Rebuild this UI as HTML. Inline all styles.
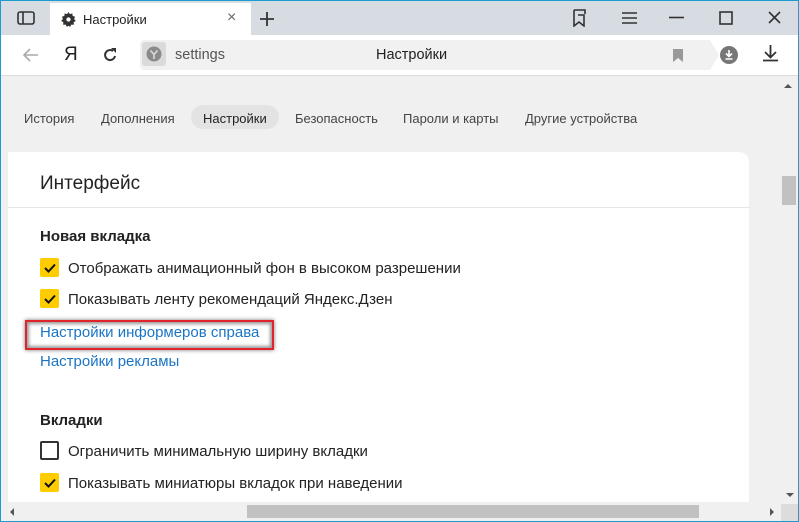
<!DOCTYPE html>
<html><head><meta charset="utf-8"><style>
*{margin:0;padding:0;box-sizing:border-box}
body{width:799px;height:522px;overflow:hidden;font-family:"Liberation Sans","DejaVu Sans",sans-serif;background:#1b9bd0;position:relative}
.win{position:absolute;left:1px;top:1px;width:797px;height:520px;background:#f0f0f0;overflow:hidden}
.title{position:absolute;left:0;top:0;width:797px;height:34px;background:#d7dbe2}
.tab{position:absolute;left:49px;top:2px;width:201px;height:33px;background:#fff}
.tb{position:absolute;left:0;top:34px;width:797px;height:41px;background:#fff;border-bottom:1px solid #dcdcdc}
.addr{position:absolute;left:139px;top:5px;width:570px;height:30px;background:#f1f1f1;border-radius:4px 0 0 4px}
.t{position:absolute;white-space:nowrap}
.nav{font-size:13px;color:#444;top:110px}
.card{position:absolute;left:7px;top:151px;width:741px;height:350px;background:#fff;border-radius:0 10px 0 0;overflow:hidden}
.cb{position:absolute;left:32px;width:19px;height:19px;border-radius:2px;background:#ffcc00}
.cb.e{background:#fff;border:2px solid #333}
.lbl{font-size:15px;color:#222;left:60px}
.lnk{font-size:15px;color:#1a75c7;left:32px}
</style></head><body><div class="win">
<div class="title">
<svg style="position:absolute;left:16px;top:10px" width="18" height="14"><rect x="1" y="1" width="16" height="12" rx="2" fill="none" stroke="#333" stroke-width="1.6"/><line x1="6" y1="1" x2="6" y2="13" stroke="#333" stroke-width="1.6"/></svg>
<div class="tab">
<svg style="position:absolute;left:11px;top:9px" width="15" height="15" viewBox="0 0 16 16"><path d="M8 0l1.5 2.2 2.6-.8.3 2.7 2.6.9-1 2.5 1.8 2-2.3 1.4.2 2.7-2.7-.2-1.3 2.4L8 14.6l-1.7 1.2-1.3-2.4-2.7.2.2-2.7L.2 9.5 2 7.5 1 5l2.6-.9.3-2.7 2.6.8z" fill="#333"/><circle cx="8" cy="8" r="2.3" fill="#fff"/></svg>
<span class="t" style="left:33px;top:9px;font-size:13px;color:#222">Настройки</span>
<span class="t" style="left:177px;top:6px;font-size:16px;color:#666">×</span>
</div>
<svg style="position:absolute;left:258px;top:10px" width="16" height="16"><path d="M8 1v14M1 8h14" stroke="#333" stroke-width="1.8"/></svg>
<svg style="position:absolute;left:572px;top:8px" width="16" height="18"><path d="M1 1h11v4M1 1v16l5-4 5 4V6H5" fill="none" stroke="#333" stroke-width="1.6"/></svg>
<svg style="position:absolute;left:621px;top:11px" width="15" height="12"><path d="M0 1h15M0 6h15M0 11h15" stroke="#333" stroke-width="1.6"/></svg>
<svg style="position:absolute;left:668px;top:15px" width="15" height="3"><path d="M0 1.5h15" stroke="#333" stroke-width="1.6"/></svg>
<svg style="position:absolute;left:718px;top:10px" width="14" height="14"><rect x="1" y="1" width="12" height="12" fill="none" stroke="#333" stroke-width="1.6"/></svg>
<svg style="position:absolute;left:767px;top:10px" width="13" height="13"><path d="M1 1l11 11M12 1L1 12" stroke="#333" stroke-width="1.6"/></svg>
</div>
<div class="tb">
<svg style="position:absolute;left:22px;top:13px" width="16" height="14"><path d="M15 7H2M7 1L1 7l6 6" fill="none" stroke="#aaa" stroke-width="1.6"/></svg>
<span class="t" style="left:63px;top:9px;font-size:19px;color:#222">Я</span>
<svg style="position:absolute;left:102px;top:12px" width="15" height="16"><path d="M12 9a5 5 0 1 1-2-5" fill="none" stroke="#333" stroke-width="2"/><path d="M8 1h5v5z" fill="#333"/></svg>
<div class="addr">
<div style="position:absolute;left:2px;top:2px;width:24px;height:24px;background:#dadada;border-radius:3px"></div>
<svg style="position:absolute;left:6px;top:6px" width="16" height="16"><circle cx="8" cy="8" r="7.5" fill="#8a8a8a"/><path d="M4.5 4.5L8 8.5l3.5-4M8 8.5V13" stroke="#dadada" stroke-width="1.6" fill="none"/></svg>
<span class="t" style="left:35px;top:7px;font-size:14.5px;color:#555">settings</span>
<span class="t" style="left:236px;top:7px;font-size:14.5px;color:#222">Настройки</span>
<svg style="position:absolute;left:533px;top:9px" width="10" height="13"><path d="M0 0h10v13L5 9 0 13z" fill="#999"/></svg>
</div>
<svg style="position:absolute;left:709px;top:5px" width="10" height="30"><path d="M0 0l9 15-9 15z" fill="#f1f1f1"/></svg>
<svg style="position:absolute;left:719px;top:11px" width="18" height="18"><circle cx="9" cy="9" r="9" fill="#777"/><path d="M9 4v6M6 7.5l3 3 3-3M5.5 13h7" stroke="#fff" stroke-width="1.6" fill="none"/></svg>
<svg style="position:absolute;left:762px;top:10px" width="15" height="17"><path d="M7.5 0v12M2 7l5.5 5.5L13 7M0 15.5h15" stroke="#333" stroke-width="1.8" fill="none"/></svg>
</div>
<span class="t nav" style="left:23px">История</span>
<span class="t nav" style="left:100px">Дополнения</span>
<div style="position:absolute;left:190px;top:104px;width:88px;height:24px;background:#e3e3e3;border-radius:12px"></div>
<span class="t nav" style="left:202px;color:#222">Настройки</span>
<span class="t nav" style="left:294px">Безопасность</span>
<span class="t nav" style="left:402px">Пароли и карты</span>
<span class="t nav" style="left:524px">Другие устройства</span>
<div class="card">
<span class="t" style="left:32px;top:21px;font-size:19px;color:#222">Интерфейс</span>
<div style="position:absolute;left:0;top:55px;width:741px;height:1px;background:#e6e6e6"></div>
<span class="t" style="left:32px;top:76px;font-size:15px;font-weight:bold;color:#222">Новая вкладка</span>
<div class="cb" style="top:106px"></div><svg style="position:absolute;left:36px;top:111px" width="12" height="10"><path d="M1 5l3.5 3.5L11 1.5" stroke="#111" stroke-width="2" fill="none"/></svg>
<span class="t lbl" style="top:108px">Отображать анимационный фон в высоком разрешении</span>
<div class="cb" style="top:137px"></div><svg style="position:absolute;left:36px;top:142px" width="12" height="10"><path d="M1 5l3.5 3.5L11 1.5" stroke="#111" stroke-width="2" fill="none"/></svg>
<span class="t lbl" style="top:139px">Показывать ленту рекомендаций Яндекс.Дзен</span>
<div style="position:absolute;left:17px;top:168px;width:249px;height:30px;border:2px solid #e0242a;box-shadow:0 0 3px 2px #999 inset,0 0 4px #777"></div>
<span class="t lnk" style="top:172px">Настройки информеров справа</span>
<span class="t lnk" style="top:201px">Настройки рекламы</span>
<span class="t" style="left:32px;top:260px;font-size:15px;font-weight:bold;color:#222">Вкладки</span>
<div class="cb e" style="top:289px"></div>
<span class="t lbl" style="top:291px">Ограничить минимальную ширину вкладки</span>
<div class="cb" style="top:321px"></div><svg style="position:absolute;left:36px;top:326px" width="12" height="10"><path d="M1 5l3.5 3.5L11 1.5" stroke="#111" stroke-width="2" fill="none"/></svg>
<span class="t lbl" style="top:323px">Показывать миниатюры вкладок при наведении</span>
</div>
<svg style="position:absolute;left:783px;top:82px" width="8" height="5"><path d="M0 5l4-4 4 4z" fill="#555"/></svg>
<div style="position:absolute;left:781px;top:175px;width:14px;height:29px;background:#c1c1c1"></div>
<svg style="position:absolute;left:785px;top:492px" width="8" height="5"><path d="M0 0h8L4 4z" fill="#555"/></svg>
<div style="position:absolute;left:246px;top:504px;width:452px;height:13px;background:#c1c1c1"></div>
<svg style="position:absolute;left:8px;top:507px" width="5" height="8"><path d="M5 0v8L1 4z" fill="#555"/></svg>
<svg style="position:absolute;left:769px;top:507px" width="5" height="8"><path d="M0 0v8l4-4z" fill="#555"/></svg>
<div style="position:absolute;left:780px;top:503px;width:17px;height:17px;background:#dcdcdc"></div>
</div></body></html>
